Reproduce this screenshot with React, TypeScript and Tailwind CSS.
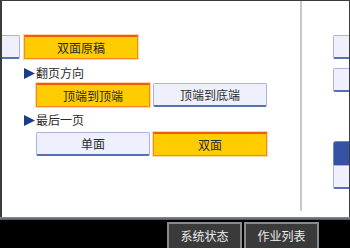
const FONT = "font-['Noto_Sans_CJK_SC','Noto_Sans',sans-serif]";

function LightBtn({ label, className = "" }: { label?: string; className?: string }) {
  return (
    <div
      className={`h-[24px] bg-[#eef1fd] border border-[#a9b5dd] border-b-2 border-b-[#5a6eb4] rounded-[2px] flex items-center justify-center text-[12px] text-[#2a2a2a] leading-none ${className}`}
    >
      {label}
    </div>
  );
}

function OrangeBtn({ label, className = "" }: { label: string; className?: string }) {
  return (
    <div
      className={`h-[24px] bg-[#ffcc00] border border-[#f5892a] border-t-2 border-t-[#ee5a14] shadow-[0_0_0_1px_#ffd7a6] flex items-center justify-center text-[12px] text-[#2a2a2a] leading-none ${className}`}
    >
      {label}
    </div>
  );
}

function Label({ text, className = "" }: { text: string; className?: string }) {
  return (
    <div className={`flex items-center h-[14px] pl-[22px] ${className}`}>
      <svg width="11" height="11" viewBox="0 0 11 11" className="mr-[1px]">
        <polygon points="0,0 11,5.5 0,11" fill="#1c3d8e" />
      </svg>
      <span className="text-[12px] leading-none text-[#2a2a2a]">{text}</span>
    </div>
  );
}

function BarBtn({ label }: { label: string }) {
  return (
    <div className="w-[75px] h-[26px] bg-[#3a3a3a] border-2 border-[#8a8a8a] border-b-0 flex items-center justify-center text-[12px] text-[#ececec] leading-none">
      {label}
    </div>
  );
}

export default function App() {
  return (
    <div className={`w-[350px] h-[248px] bg-black flex flex-col overflow-hidden ${FONT}`}>
      {/* main panel */}
      <div className="h-[218px] bg-white border-l-2 border-t border-r border-[#3c3c3c] flex">
        {/* left content */}
        <div className="w-[298px] pt-[34px] flex flex-col">
          <div className="flex gap-[4px]">
            <LightBtn className="w-[18px] border-l-0 rounded-l-none" />
            <OrangeBtn label="双面原稿" className="w-[114px]" />
          </div>

          <Label text="翻页方向" className="mt-[7px]" />
          <div className="flex gap-[3px] pl-[34px] mt-[3px]">
            <OrangeBtn label="顶端到顶端" className="w-[114px]" />
            <LightBtn label="顶端到底端" className="w-[114px]" />
          </div>

          <Label text="最后一页" className="mt-[6px]" />
          <div className="flex gap-[3px] pl-[34px] mt-[5px]">
            <LightBtn label="单面" className="w-[114px]" />
            <OrangeBtn label="双面" className="w-[114px]" />
          </div>
        </div>

        {/* divider */}
        <div className="w-[2px] h-[210px] bg-[#c9c9c9]" />

        {/* right column, clipped */}
        <div className="flex-1 overflow-hidden pl-[31px] pt-[34px] flex flex-col">
          <LightBtn className="w-[40px] rounded-r-none" />
          <LightBtn className="w-[40px] mt-[9px] rounded-r-none" />
          <div className="w-[40px] h-[24px] mt-[49px] bg-[#3552a4] border border-[#6f86c8] border-b-0 rounded-tl-[3px]" />
          <LightBtn className="w-[40px] rounded-t-none" />
        </div>
      </div>

      {/* separator band */}
      <div className="h-[3px] bg-gradient-to-b from-[#8a8f9a] to-[#4d525c]" />

      {/* bottom bar */}
      <div className="flex-1 flex justify-end gap-[2px] pr-[31px] pt-[2px]">
        <BarBtn label="系统状态" />
        <BarBtn label="作业列表" />
      </div>
    </div>
  );
}
